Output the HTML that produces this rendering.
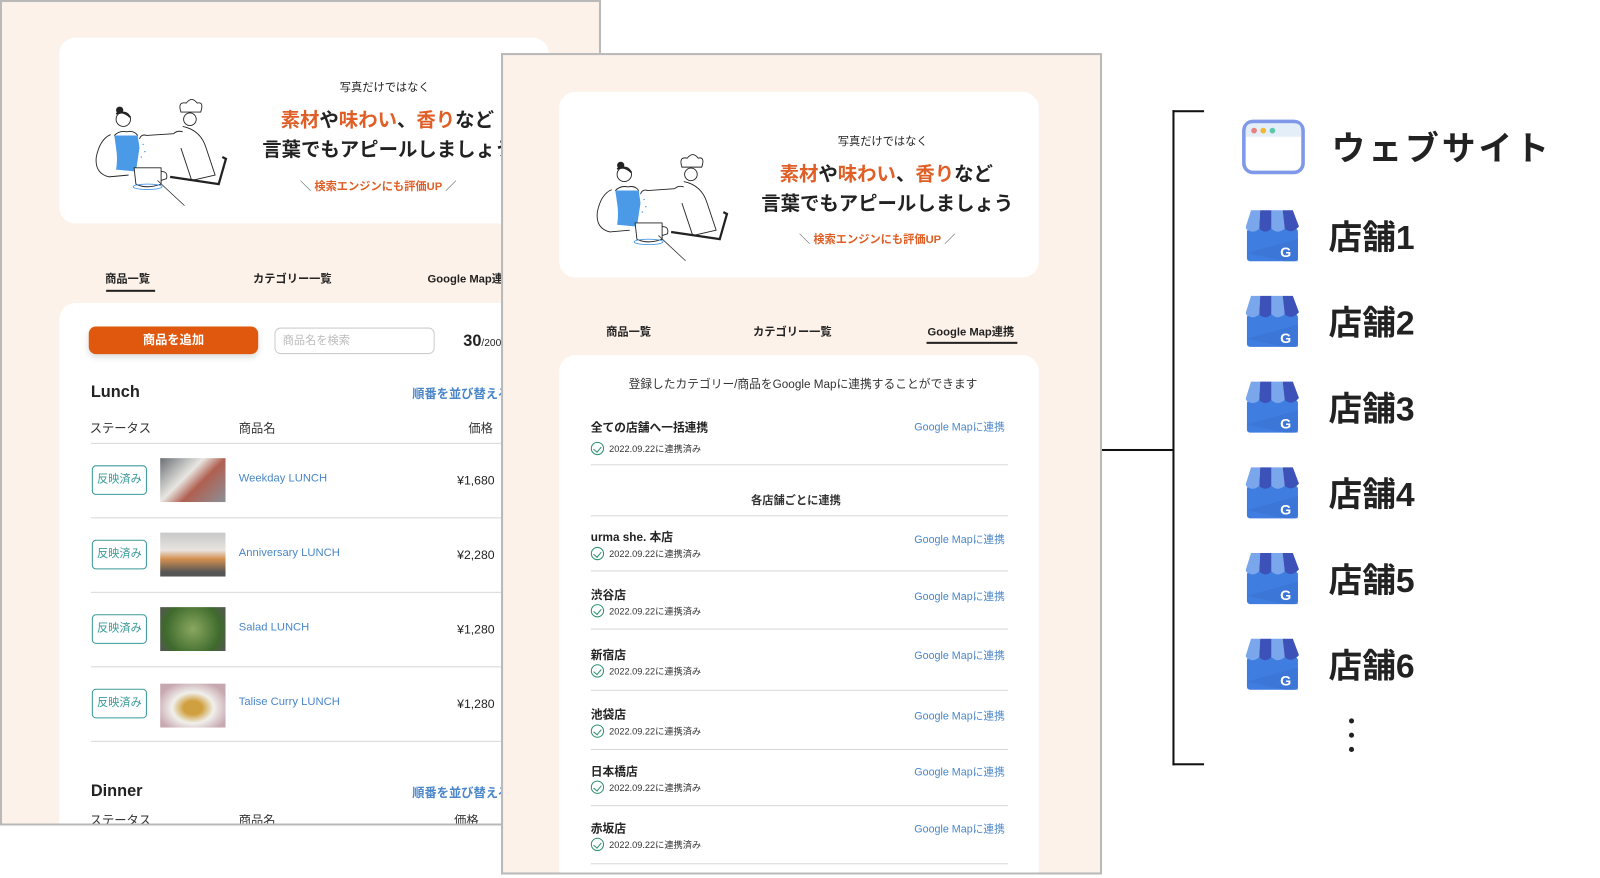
<!DOCTYPE html>
<html><head><meta charset="utf-8">
<style>
*{margin:0;padding:0;box-sizing:border-box}
html,body{width:1600px;height:878px;overflow:hidden;background:#fff}
body{font-family:"Liberation Sans","Noto Sans CJK JP",sans-serif;color:#222}
#w{position:absolute;left:0;top:0;width:1568px;height:860px;overflow:hidden;transform:scale(1.0204);transform-origin:0 0}
.abs{position:absolute}
.win{position:absolute;background:#fdf2ea;border:2px solid #b9b9b9;overflow:hidden}
.card{position:absolute;background:#fff;border-radius:16px}
.t{position:absolute;white-space:nowrap}
.or{color:#df5f27}
.blue{color:#4a86c8}
.line{position:absolute;height:1px;background:#d8d8d8}
.badge{position:absolute;width:54px;height:29px;border:1px solid #3b9a99;border-radius:4px;color:#3b9a99;font-size:11px;text-align:center;line-height:27px}
.img{position:absolute;width:64px;height:43px}
.chk{position:absolute;width:13px;height:13px;border:1.3px solid #2f8f6f;border-radius:50%}
.chk:after{content:"";position:absolute;left:3px;top:2px;width:4px;height:6px;border-right:1.3px solid #2f8f6f;border-bottom:1.3px solid #2f8f6f;transform:rotate(40deg)}
</style></head><body><div id="w">

<svg width="0" height="0" style="position:absolute">
<defs>
<g id="illu">
<path d="M30 45 Q18 50 14 70 Q12 88 28 92 L50 90" fill="none" stroke="#222" stroke-width="1"/>
<path d="M34 46 L36 60 Q38 72 36 84 L58 86 L62 60 L60 46 Z" fill="#4a9ae8"/>
<path d="M34 46 Q40 40 48 42 Q56 40 60 46" fill="none" stroke="#222" stroke-width="1"/>
<circle cx="44" cy="28" r="8" fill="none" stroke="#222" stroke-width="1"/>
<circle cx="40" cy="18" r="4" fill="#222"/>
<path d="M36 22 Q44 18 52 26" fill="none" stroke="#222" stroke-width="2"/>
<path d="M56 82 L86 82 L86 100 Q70 106 58 100 Z" fill="#fff" stroke="#222" stroke-width="1"/>
<ellipse cx="71" cy="103" rx="16" ry="3" fill="none" stroke="#4a9ae8" stroke-width="1"/>
<path d="M86 86 Q94 86 92 94 L86 96" fill="none" stroke="#222" stroke-width="1"/>
<path d="M62 50 Q64 44 70 46 L100 44 Q104 40 110 42" fill="none" stroke="#222" stroke-width="1"/>
<circle cx="118" cy="28" r="7" fill="none" stroke="#222" stroke-width="1"/>
<path d="M108 20 Q104 8 114 10 Q120 2 126 10 Q134 8 130 20 Z" fill="#fff" stroke="#222" stroke-width="1"/>
<path d="M110 36 Q130 40 136 60 L146 90 L120 96 L108 60" fill="none" stroke="#222" stroke-width="1"/>
<path d="M96 92 L150 100 L158 72 L154 70" fill="none" stroke="#222" stroke-width="2.5"/>
<path d="M82 96 L112 124" stroke="#222" stroke-width="0.8"/>
<circle cx="66" cy="56" r=".8" fill="#4a9ae8"/><circle cx="68" cy="64" r=".8" fill="#4a9ae8"/><circle cx="64" cy="70" r=".8" fill="#4a9ae8"/>
</g>
<g id="store">
<rect x="3" y="20" width="50" height="32" rx="3" fill="#3f7ee0"/>
<path d="M3 44 L40 52 L53 52 L53 30 Z" fill="#3a72d0" opacity=".6"/>
<path d="M2 18 L7 2 L16 2 L15 20 Q9 26 2 20 Z" fill="#7aa6ec"/>
<path d="M16 2 L27 2 L27 20 Q21 26 15 20 Z" fill="#3c52b8"/>
<path d="M27 2 L38 2 L40 20 Q33 26 27 20 Z" fill="#7aa6ec"/>
<path d="M38 2 L48 2 L54 18 Q47 26 40 20 Z" fill="#3c52b8"/>
<text x="41" y="48" font-family="Liberation Sans,sans-serif" font-weight="bold" font-size="14" fill="#fff" text-anchor="middle">G</text>
</g>
</defs></svg>

<!-- LEFT WINDOW -->
<div class="win" style="left:0;top:0;width:589px;height:809px">
 <div class="card" style="left:56px;top:35px;width:480px;height:182px"></div>
 <svg class="abs" style="left:80px;top:90px" width="150" height="115" viewBox="0 0 170 130"><use href="#illu"/></svg>
 <div class="t" style="left:331px;top:75px;font-size:11px">写真だけではなく</div>
 <div class="t" style="left:273px;top:101px;font-size:19px;font-weight:bold">
  <span class="or">素材</span>や<span class="or">味わい</span>、<span class="or">香り</span>など</div>
 <div class="t" style="left:255px;top:130px;font-size:19px;font-weight:bold">言葉でもアピールしましょう</div>
 <div class="t" style="left:292px;top:172px;font-size:11px"><span style="color:#555">＼ </span><span class="or" style="font-weight:bold">検索エンジンにも評価UP</span><span style="color:#555"> ／</span></div>

 <div class="t" style="left:101px;top:263px;font-size:11px;font-weight:bold">商品一覧</div>
 <div class="abs" style="left:102px;top:282px;width:48px;height:1.5px;background:#222"></div>
 <div class="t" style="left:246px;top:263px;font-size:11px;font-weight:bold">カテゴリー一覧</div>
 <div class="t" style="left:417px;top:263px;font-size:11px;font-weight:bold">Google Map連携</div>

 <div class="card" style="left:56px;top:295px;width:530px;height:512px;border-bottom-left-radius:0;border-bottom-right-radius:0"></div>
 <div class="abs" style="left:85px;top:318px;width:166px;height:27px;background:#e0580e;border-radius:7px;box-shadow:0 3px 6px rgba(0,0,0,.15);color:#fff;font-size:12px;font-weight:bold;text-align:center;line-height:27px">商品を追加</div>
 <div class="abs" style="left:267px;top:319px;width:157px;height:26px;border:1px solid #ccc;border-radius:6px;color:#bbb;font-size:11px;padding-left:7px;line-height:24px">商品名を検索</div>
 <div class="t" style="left:452px;top:324px;font-size:16px;font-weight:bold">30<span style="font-size:10px;font-weight:normal">/200</span></div>
 <div class="t" style="left:87px;top:374px;font-size:16px;font-weight:bold">Lunch</div>
 <div class="t blue" style="left:402px;top:375px;font-size:12px;font-weight:bold">順番を並び替える</div>
 <div class="t" style="left:86px;top:409px;font-size:12px;color:#333">ステータス</div>
 <div class="t" style="left:232px;top:409px;font-size:12px;color:#333">商品名</div>
 <div class="t" style="left:457px;top:409px;font-size:12px;color:#333">価格</div>
 <div class="line" style="left:87px;top:432px;width:420px"></div>

 <div class="badge" style="left:88px;top:454px">反映済み</div>
 <div class="img" style="left:155px;top:447px;background:linear-gradient(135deg,#6a6f74,#e8e6e2 40%,#b06050 60%,#8a9098)"></div>
 <div class="t blue" style="left:232px;top:461px;font-size:11px">Weekday LUNCH</div>
 <div class="t" style="left:446px;top:462px;font-size:12px">¥1,680</div>
 <div class="line" style="left:87px;top:505px;width:420px"></div>

 <div class="badge" style="left:88px;top:527px">反映済み</div>
 <div class="img" style="left:155px;top:520px;background:linear-gradient(180deg,#c8c8c8,#e8e4e0 40%,#d49050 60%,#555 90%)"></div>
 <div class="t blue" style="left:232px;top:534px;font-size:11px">Anniversary LUNCH</div>
 <div class="t" style="left:446px;top:535px;font-size:12px">¥2,280</div>
 <div class="line" style="left:87px;top:578px;width:420px"></div>

 <div class="badge" style="left:88px;top:600px">反映済み</div>
 <div class="img" style="left:155px;top:593px;background:radial-gradient(circle,#8aa860,#3e6a2c 70%,#555)"></div>
 <div class="t blue" style="left:232px;top:607px;font-size:11px">Salad LUNCH</div>
 <div class="t" style="left:446px;top:608px;font-size:12px">¥1,280</div>
 <div class="line" style="left:87px;top:651px;width:420px"></div>

 <div class="badge" style="left:88px;top:673px">反映済み</div>
 <div class="img" style="left:155px;top:668px;background:radial-gradient(ellipse at 50% 55%,#d0a040 20%,#f0f0ec 45%,#c8a8b0 80%)"></div>
 <div class="t blue" style="left:232px;top:680px;font-size:11px">Talise Curry LUNCH</div>
 <div class="t" style="left:446px;top:681px;font-size:12px">¥1,280</div>
 <div class="line" style="left:87px;top:724px;width:420px"></div>

 <div class="t" style="left:87px;top:765px;font-size:16px;font-weight:bold">Dinner</div>
 <div class="t blue" style="left:402px;top:766px;font-size:12px;font-weight:bold">順番を並び替える</div>
 <div class="t" style="left:86px;top:796px;font-size:12px;line-height:12px;height:11px;overflow:hidden;color:#333">ステータス</div>
 <div class="t" style="left:232px;top:796px;font-size:12px;line-height:12px;height:11px;overflow:hidden;color:#333">商品名</div>
 <div class="t" style="left:443px;top:796px;font-size:12px;line-height:12px;height:11px;overflow:hidden;color:#333">価格</div>
</div>

<!-- RIGHT WINDOW -->
<div class="win" style="left:491px;top:52px;width:589px;height:805px">
 <div class="card" style="left:55px;top:36px;width:470px;height:182px"></div>
 <svg class="abs" style="left:80px;top:92px" width="150" height="115" viewBox="0 0 170 130"><use href="#illu"/></svg>
 <div class="t" style="left:328px;top:76px;font-size:11px">写真だけではなく</div>
 <div class="t" style="left:271px;top:102px;font-size:19px;font-weight:bold">
  <span class="or">素材</span>や<span class="or">味わい</span>、<span class="or">香り</span>など</div>
 <div class="t" style="left:253px;top:131px;font-size:19px;font-weight:bold">言葉でもアピールしましょう</div>
 <div class="t" style="left:290px;top:172px;font-size:11px"><span style="color:#555">＼ </span><span class="or" style="font-weight:bold">検索エンジンにも評価UP</span><span style="color:#555"> ／</span></div>

 <div class="t" style="left:101px;top:263px;font-size:11px;font-weight:bold">商品一覧</div>
 <div class="t" style="left:245px;top:263px;font-size:11px;font-weight:bold">カテゴリー一覧</div>
 <div class="t" style="left:416px;top:263px;font-size:11px;font-weight:bold">Google Map連携</div>
 <div class="abs" style="left:415px;top:281px;width:89px;height:1.5px;background:#222"></div>

 <div class="card" style="left:55px;top:294px;width:470px;height:507px;border-bottom-left-radius:0;border-bottom-right-radius:0"></div>
 <div class="t" style="left:123px;top:314px;font-size:11.5px;color:#333">登録したカテゴリー/商品をGoogle Mapに連携することができます</div>
 <div class="t" style="left:86px;top:357px;font-size:11.5px;font-weight:bold">全ての店舗へ一括連携</div>
 <div class="t blue" style="left:403px;top:357px;font-size:10.5px">Google Mapに連携</div>
 <div class="chk" style="left:86px;top:379px"></div>
 <div class="t" style="left:104px;top:379px;font-size:9px;color:#333">2022.09.22に連携済み</div>
 <div class="line" style="left:86px;top:401px;width:409px"></div>
 <div class="t" style="left:243px;top:428px;font-size:11px;color:#333;font-weight:bold">各店舗ごとに連携</div>
 <div class="line" style="left:86px;top:451px;width:409px"></div>

 <div class="t" style="left:86px;top:464px;font-size:11.5px;font-weight:bold">urma she. 本店</div>
 <div class="t blue" style="left:403px;top:467px;font-size:10.5px">Google Mapに連携</div>
 <div class="chk" style="left:86px;top:482px"></div>
 <div class="t" style="left:104px;top:482px;font-size:9px;color:#333">2022.09.22に連携済み</div>
 <div class="line" style="left:86px;top:505px;width:409px"></div>

 <div class="t" style="left:86px;top:521px;font-size:11.5px;font-weight:bold">渋谷店</div>
 <div class="t blue" style="left:403px;top:523px;font-size:10.5px">Google Mapに連携</div>
 <div class="chk" style="left:86px;top:538px"></div>
 <div class="t" style="left:104px;top:538px;font-size:9px;color:#333">2022.09.22に連携済み</div>
 <div class="line" style="left:86px;top:562px;width:409px"></div>

 <div class="t" style="left:86px;top:580px;font-size:11.5px;font-weight:bold">新宿店</div>
 <div class="t blue" style="left:403px;top:581px;font-size:10.5px">Google Mapに連携</div>
 <div class="chk" style="left:86px;top:597px"></div>
 <div class="t" style="left:104px;top:597px;font-size:9px;color:#333">2022.09.22に連携済み</div>
 <div class="line" style="left:86px;top:622px;width:409px"></div>

 <div class="t" style="left:86px;top:638px;font-size:11.5px;font-weight:bold">池袋店</div>
 <div class="t blue" style="left:403px;top:640px;font-size:10.5px">Google Mapに連携</div>
 <div class="chk" style="left:86px;top:656px"></div>
 <div class="t" style="left:104px;top:656px;font-size:9px;color:#333">2022.09.22に連携済み</div>
 <div class="line" style="left:86px;top:680px;width:409px"></div>

 <div class="t" style="left:86px;top:694px;font-size:11.5px;font-weight:bold">日本橋店</div>
 <div class="t blue" style="left:403px;top:695px;font-size:10.5px">Google Mapに連携</div>
 <div class="chk" style="left:86px;top:711px"></div>
 <div class="t" style="left:104px;top:711px;font-size:9px;color:#333">2022.09.22に連携済み</div>
 <div class="line" style="left:86px;top:735px;width:409px"></div>

 <div class="t" style="left:86px;top:750px;font-size:11.5px;font-weight:bold">赤坂店</div>
 <div class="t blue" style="left:403px;top:751px;font-size:10.5px">Google Mapに連携</div>
 <div class="chk" style="left:86px;top:767px"></div>
 <div class="t" style="left:104px;top:767px;font-size:9px;color:#333">2022.09.22に連携済み</div>
 <div class="line" style="left:86px;top:792px;width:409px"></div>
</div>

<!-- connector & bracket -->
<div class="abs" style="left:1080px;top:440px;width:70px;height:2px;background:#111"></div>
<div class="abs" style="left:1149px;top:108px;width:2px;height:642px;background:#111"></div>
<div class="abs" style="left:1149px;top:108px;width:31px;height:2px;background:#111"></div>
<div class="abs" style="left:1149px;top:748px;width:31px;height:2px;background:#111"></div>

<!-- website icon -->
<svg class="abs" style="left:1217px;top:117px" width="62" height="54" viewBox="0 0 62 54">
 <rect x="2" y="2" width="58" height="50" rx="9" fill="#fff" stroke="#7f98e8" stroke-width="3.5"/>
 <path d="M4 17 L4 10 Q4 4 10 4 L52 4 Q58 4 58 10 L58 17 Z" fill="#e4eef8"/>
 <circle cx="12" cy="11" r="2.8" fill="#e88080"/><circle cx="21" cy="11" r="2.8" fill="#f0b830"/><circle cx="30" cy="11" r="2.8" fill="#5cc8b0"/>
</svg>
<div class="t" style="left:1305px;top:119px;font-size:33px;font-weight:bold;letter-spacing:3px;color:#222">ウェブサイト</div>

<svg class="abs" style="left:1218px;top:204px" width="58" height="54" viewBox="0 0 56 54"><use href="#store"/></svg>
<div class="t" style="left:1302px;top:206px;font-size:33px;font-weight:bold;color:#222">店舗1</div>
<svg class="abs" style="left:1218px;top:288px" width="58" height="54" viewBox="0 0 56 54"><use href="#store"/></svg>
<div class="t" style="left:1302px;top:290px;font-size:33px;font-weight:bold;color:#222">店舗2</div>
<svg class="abs" style="left:1218px;top:372px" width="58" height="54" viewBox="0 0 56 54"><use href="#store"/></svg>
<div class="t" style="left:1302px;top:374px;font-size:33px;font-weight:bold;color:#222">店舗3</div>
<svg class="abs" style="left:1218px;top:456px" width="58" height="54" viewBox="0 0 56 54"><use href="#store"/></svg>
<div class="t" style="left:1302px;top:458px;font-size:33px;font-weight:bold;color:#222">店舗4</div>
<svg class="abs" style="left:1218px;top:540px" width="58" height="54" viewBox="0 0 56 54"><use href="#store"/></svg>
<div class="t" style="left:1302px;top:542px;font-size:33px;font-weight:bold;color:#222">店舗5</div>
<svg class="abs" style="left:1218px;top:624px" width="58" height="54" viewBox="0 0 56 54"><use href="#store"/></svg>
<div class="t" style="left:1302px;top:626px;font-size:33px;font-weight:bold;color:#222">店舗6</div>

<div class="abs" style="left:1322px;top:704px;width:5px;height:5px;border-radius:50%;background:#222"></div>
<div class="abs" style="left:1322px;top:718px;width:5px;height:5px;border-radius:50%;background:#222"></div>
<div class="abs" style="left:1322px;top:732px;width:5px;height:5px;border-radius:50%;background:#222"></div>

</div></body></html>
